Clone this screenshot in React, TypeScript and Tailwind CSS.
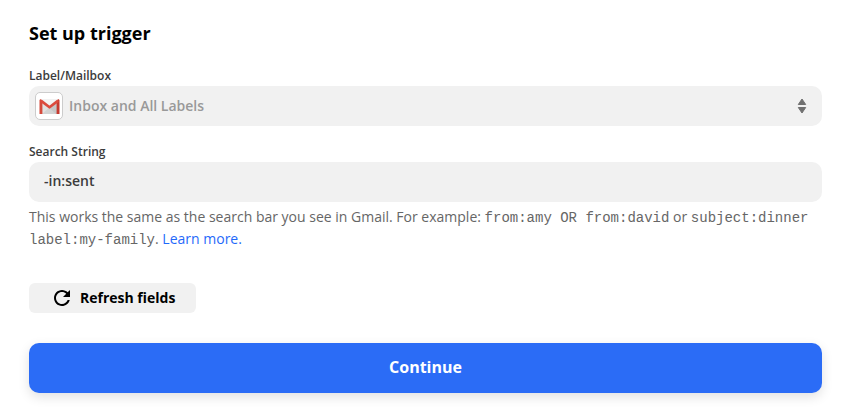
import { useState } from "react";

const GmailIcon = () => (
  <svg viewBox="0 0 21 15" className="h-[15px] w-[21px]" aria-hidden="true">
    <path d="M2 0.500h17v14.500H2z" fill="#e2e2e2" />
    <path d="M3 15l7.500-6.500L19 15z" fill="#d3d3d3" />
    <path d="M10.500 9L18 3v12h-1z" fill="#c6c6c6" />
    <path d="M3 0.500h15l-7.500 6z" fill="#f4f4f4" />
    <path d="M0.500 15V1.500C0.500 0.600 1.100 0.200 2 0.200L3.400 4V15z" fill="#d54b3d" />
    <path d="M20.500 15V1.500C20.500 0.600 19.900 0.200 19 0.200L17.600 4V15z" fill="#c63a30" />
    <path d="M1.800 1.600l8.700 6.700 8.700-6.700" fill="none" stroke="#dc4a3d" strokeWidth="2.600" strokeLinejoin="round" />
  </svg>
);

const SortIcon = () => (
  <svg viewBox="0 0 10 16" className="h-4 w-[10px]" fill="#707070" aria-hidden="true">
    <path d="M5 1L8.700 6.500H1.300z" stroke="#707070" strokeWidth="1" strokeLinejoin="round" />
    <path d="M5 15L8.700 9.500H1.300z" stroke="#707070" strokeWidth="1" strokeLinejoin="round" />
  </svg>
);

const RefreshIcon = () => (
  <svg viewBox="0 0 24 24" className="h-6 w-6" fill="currentColor" aria-hidden="true">
    <path d="M17.650 6.350C16.200 4.900 14.210 4 12 4c-4.420 0-7.990 3.580-7.990 8s3.570 8 7.990 8c3.730 0 6.840-2.550 7.730-6h-2.080c-.82 2.330-3.040 4-5.650 4-3.310 0-6-2.690-6-6s2.690-6 6-6c1.660 0 3.140.69 4.220 1.780L13 11h7V4l-2.350 2.350z" />
  </svg>
);

const App = () => {
  const [search, setSearch] = useState("-in:sent");

  return (
    <main className="bg-white pt-[21px] pr-[27px] pb-6 pl-[29px] font-['Open_Sans','Noto_Sans',sans-serif]">
      <h1 className="text-lg leading-6 font-bold text-black">Set up trigger</h1>

      <form onSubmit={(e) => e.preventDefault()}>
        {/* Mailbox */}
        <div className="mt-[23px]">
          <label htmlFor="mailbox" className="block pb-[2px] text-xs leading-4 font-semibold text-[#3c3c3c]">
            Label/Mailbox
          </label>
          <div className="relative">
            <select
              id="mailbox"
              className="block h-10 w-full appearance-none rounded-[10px] bg-[#f1f1f1] pr-10 pl-10 text-sm font-semibold text-[#999]"
            >
              <option>Inbox and All Labels</option>
            </select>
            <span className="pointer-events-none absolute top-[6px] left-[6px] flex h-7 w-7 items-center justify-center rounded-[5px] border border-[#ccc] bg-white">
              <GmailIcon />
            </span>
            <span className="pointer-events-none absolute top-3 right-[15px]">
              <SortIcon />
            </span>
          </div>
        </div>

        {/* Search */}
        <div className="mt-[18px]">
          <label htmlFor="search" className="block pb-[2px] text-xs leading-4 font-semibold text-[#3c3c3c]">
            Search String
          </label>
          <input
            id="search"
            type="text"
            value={search}
            onChange={(e) => setSearch(e.target.value)}
            className="block h-10 w-full rounded-[10px] bg-[#f1f1f1] px-[15px] pb-1 text-sm font-semibold text-[#3c3c3c]"
          />
          <p className="mt-1 text-sm leading-[22px] text-[#666]">
            This works the same as the search bar you see in Gmail. For example:{" "}
            <code className="font-['Liberation_Mono',monospace] leading-4">from:amy OR from:david</code> or{" "}
            <code className="font-['Liberation_Mono',monospace] leading-4">subject:dinner label:my-family</code>.{" "}
            <a href="#" className="text-[#1f69fa]">
              Learn more.
            </a>
          </p>
        </div>

        <button
          type="button"
          className="mt-[33px] flex h-[30px] items-center gap-[6px] rounded-md bg-[#f1f1f1] px-[21px] text-sm font-bold text-black"
        >
          <RefreshIcon />
          Refresh fields
        </button>

        <button
          type="submit"
          className="mt-[30px] block h-[50px] w-full rounded-[10px] bg-[#2b6cf6] pb-[2px] text-base font-bold text-white shadow-[0_4px_12px_rgba(0,0,0,0.12)]"
        >
          Continue
        </button>
      </form>
    </main>
  );
};

export default App;
